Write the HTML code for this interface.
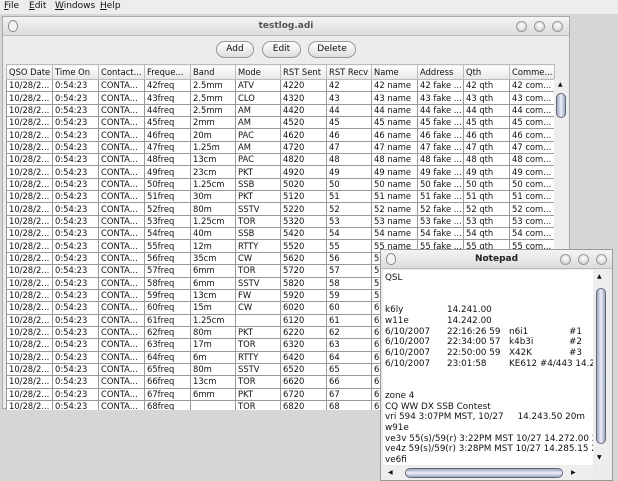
<!DOCTYPE html>
<html><head><meta charset="utf-8"><style>
*{margin:0;padding:0;box-sizing:border-box}
body{width:618px;height:480px;background:#d6d6d6;font-family:"DejaVu Sans","Liberation Sans",sans-serif;font-size:9px;color:#111;position:relative;overflow:hidden}
.menu{position:absolute;left:0;top:0;width:618px;height:14px;background:#ededed;font-size:9px}
.menu span{position:absolute;top:1px}
.menu u{text-decoration:underline}
.win{position:absolute;left:2px;top:16px;width:568px;height:393px;background:#ececec;border:1px solid #aaa}
.tb{position:absolute;left:0;top:0;width:100%;height:19px;background:linear-gradient(#f4f4f4,#dcdcdc);border-bottom:1px solid #bbb;text-align:center;font-weight:bold;line-height:19px;color:#555;font-size:9px}
.circ{position:absolute;top:4px;width:11px;height:11px;border-radius:50%;border:1px solid #999;background:radial-gradient(circle at 50% 35%,#fff,#c8c8c8)}
.apple{position:absolute;top:3px;width:10px;height:12px;border:1px solid #888;border-radius:50% 50% 45% 45%;background:#f4f4f4}
.btn{position:absolute;top:24px;height:17px;border:1px solid #999;border-radius:9px;background:linear-gradient(#fff,#ddd);text-align:center;line-height:15px;font-size:9px}
table{position:absolute;left:3px;top:47px;border-collapse:collapse;table-layout:fixed;background:#fff}
td,th{border:1px solid #999;height:12.35px;padding:0 0 0 2px;white-space:nowrap;overflow:hidden;font-weight:normal;text-align:left;font-size:8.4px;line-height:11px}
th{background:linear-gradient(#fff,#e6e6e6);height:15px;border-color:#bbb}
.clip{position:absolute;left:3px;top:47px;width:549px;height:346px;overflow:hidden}
.clip table{left:0;top:0}
.vs{position:absolute;left:551px;top:62px;width:14px;height:330px;background:#eee}
.thumb{position:absolute;left:2px;top:14px;width:10px;height:25px;border:1px solid #667;border-radius:5px;background:linear-gradient(90deg,#9ab,#eef,#9ab)}
.np{position:absolute;left:380px;top:249px;width:233px;height:232px;background:#ececec;border:1px solid #999}
.np .tb{color:#222}
.txt{position:absolute;left:2px;top:20px;width:210px;height:195px;background:#fff;overflow:hidden}
.ln{position:absolute;left:2px;height:11px;white-space:nowrap;font-size:8.8px}
.ln b{position:absolute;font-weight:normal}
.nvs{position:absolute;left:212px;top:20px;width:15px;height:195px;background:#eee}
.nth{position:absolute;left:3px;top:18px;width:10px;height:156px;border:1px solid #667;border-radius:5px;background:linear-gradient(90deg,#9ab,#eef,#9ab)}
.nhs{position:absolute;left:2px;top:216px;width:210px;height:14px;background:#eee}
.nhth{position:absolute;left:22px;top:2px;width:158px;height:10px;border:1px solid #667;border-radius:5px;background:linear-gradient(#9ab,#eef,#9ab)}
</style></head><body>
<div class="menu"><span style="left:4px"><u>F</u>ile</span><span style="left:29px"><u>E</u>dit</span><span style="left:55px"><u>W</u>indows</span><span style="left:100px"><u>H</u>elp</span></div>
<div class="win">
<div class="tb">testlog.adi<div class="apple" style="left:5px"></div><div class="circ" style="left:513px"></div><div class="circ" style="left:531px"></div><div class="circ" style="left:549px"></div></div>
<div class="btn" style="left:213px;width:38px">Add</div>
<div class="btn" style="left:259px;width:39px">Edit</div>
<div class="btn" style="left:305px;width:48px">Delete</div>
<div class="clip"><table>
<colgroup><col style="width:46px"><col style="width:46px"><col style="width:46px"><col style="width:46px"><col style="width:45px"><col style="width:45px"><col style="width:46px"><col style="width:45px"><col style="width:46px"><col style="width:46px"><col style="width:46px"><col style="width:45px"></colgroup>
<tr><th>QSO Date</th><th>Time On</th><th>Contact...</th><th>Freque...</th><th>Band</th><th>Mode</th><th>RST Sent</th><th>RST Recv</th><th>Name</th><th>Address</th><th>Qth</th><th>Comme...</th></tr>
<tr><td>10/28/2...</td><td>0:54:23</td><td>CONTA...</td><td>42freq</td><td>2.5mm</td><td>ATV</td><td>4220</td><td>42</td><td>42 name</td><td>42 fake ...</td><td>42 qth</td><td>42 com...</td></tr>
<tr><td>10/28/2...</td><td>0:54:23</td><td>CONTA...</td><td>43freq</td><td>2.5mm</td><td>CLO</td><td>4320</td><td>43</td><td>43 name</td><td>43 fake ...</td><td>43 qth</td><td>43 com...</td></tr>
<tr><td>10/28/2...</td><td>0:54:23</td><td>CONTA...</td><td>44freq</td><td>2.5mm</td><td>AM</td><td>4420</td><td>44</td><td>44 name</td><td>44 fake ...</td><td>44 qth</td><td>44 com...</td></tr>
<tr><td>10/28/2...</td><td>0:54:23</td><td>CONTA...</td><td>45freq</td><td>2mm</td><td>AM</td><td>4520</td><td>45</td><td>45 name</td><td>45 fake ...</td><td>45 qth</td><td>45 com...</td></tr>
<tr><td>10/28/2...</td><td>0:54:23</td><td>CONTA...</td><td>46freq</td><td>20m</td><td>PAC</td><td>4620</td><td>46</td><td>46 name</td><td>46 fake ...</td><td>46 qth</td><td>46 com...</td></tr>
<tr><td>10/28/2...</td><td>0:54:23</td><td>CONTA...</td><td>47freq</td><td>1.25m</td><td>AM</td><td>4720</td><td>47</td><td>47 name</td><td>47 fake ...</td><td>47 qth</td><td>47 com...</td></tr>
<tr><td>10/28/2...</td><td>0:54:23</td><td>CONTA...</td><td>48freq</td><td>13cm</td><td>PAC</td><td>4820</td><td>48</td><td>48 name</td><td>48 fake ...</td><td>48 qth</td><td>48 com...</td></tr>
<tr><td>10/28/2...</td><td>0:54:23</td><td>CONTA...</td><td>49freq</td><td>23cm</td><td>PKT</td><td>4920</td><td>49</td><td>49 name</td><td>49 fake ...</td><td>49 qth</td><td>49 com...</td></tr>
<tr><td>10/28/2...</td><td>0:54:23</td><td>CONTA...</td><td>50freq</td><td>1.25cm</td><td>SSB</td><td>5020</td><td>50</td><td>50 name</td><td>50 fake ...</td><td>50 qth</td><td>50 com...</td></tr>
<tr><td>10/28/2...</td><td>0:54:23</td><td>CONTA...</td><td>51freq</td><td>30m</td><td>PKT</td><td>5120</td><td>51</td><td>51 name</td><td>51 fake ...</td><td>51 qth</td><td>51 com...</td></tr>
<tr><td>10/28/2...</td><td>0:54:23</td><td>CONTA...</td><td>52freq</td><td>80m</td><td>SSTV</td><td>5220</td><td>52</td><td>52 name</td><td>52 fake ...</td><td>52 qth</td><td>52 com...</td></tr>
<tr><td>10/28/2...</td><td>0:54:23</td><td>CONTA...</td><td>53freq</td><td>1.25cm</td><td>TOR</td><td>5320</td><td>53</td><td>53 name</td><td>53 fake ...</td><td>53 qth</td><td>53 com...</td></tr>
<tr><td>10/28/2...</td><td>0:54:23</td><td>CONTA...</td><td>54freq</td><td>40m</td><td>SSB</td><td>5420</td><td>54</td><td>54 name</td><td>54 fake ...</td><td>54 qth</td><td>54 com...</td></tr>
<tr><td>10/28/2...</td><td>0:54:23</td><td>CONTA...</td><td>55freq</td><td>12m</td><td>RTTY</td><td>5520</td><td>55</td><td>55 name</td><td>55 fake ...</td><td>55 qth</td><td>55 com...</td></tr>
<tr><td>10/28/2...</td><td>0:54:23</td><td>CONTA...</td><td>56freq</td><td>35cm</td><td>CW</td><td>5620</td><td>56</td><td>56 name</td><td>56 fake ...</td><td>56 qth</td><td>56 com...</td></tr>
<tr><td>10/28/2...</td><td>0:54:23</td><td>CONTA...</td><td>57freq</td><td>6mm</td><td>TOR</td><td>5720</td><td>57</td><td>57 name</td><td>57 fake ...</td><td>57 qth</td><td>57 com...</td></tr>
<tr><td>10/28/2...</td><td>0:54:23</td><td>CONTA...</td><td>58freq</td><td>6mm</td><td>SSTV</td><td>5820</td><td>58</td><td>58 name</td><td>58 fake ...</td><td>58 qth</td><td>58 com...</td></tr>
<tr><td>10/28/2...</td><td>0:54:23</td><td>CONTA...</td><td>59freq</td><td>13cm</td><td>FW</td><td>5920</td><td>59</td><td>59 name</td><td>59 fake ...</td><td>59 qth</td><td>59 com...</td></tr>
<tr><td>10/28/2...</td><td>0:54:23</td><td>CONTA...</td><td>60freq</td><td>15m</td><td>CW</td><td>6020</td><td>60</td><td>60 name</td><td>60 fake ...</td><td>60 qth</td><td>60 com...</td></tr>
<tr><td>10/28/2...</td><td>0:54:23</td><td>CONTA...</td><td>61freq</td><td>1.25cm</td><td></td><td>6120</td><td>61</td><td>61 name</td><td>61 fake ...</td><td>61 qth</td><td>61 com...</td></tr>
<tr><td>10/28/2...</td><td>0:54:23</td><td>CONTA...</td><td>62freq</td><td>80m</td><td>PKT</td><td>6220</td><td>62</td><td>62 name</td><td>62 fake ...</td><td>62 qth</td><td>62 com...</td></tr>
<tr><td>10/28/2...</td><td>0:54:23</td><td>CONTA...</td><td>63freq</td><td>17m</td><td>TOR</td><td>6320</td><td>63</td><td>63 name</td><td>63 fake ...</td><td>63 qth</td><td>63 com...</td></tr>
<tr><td>10/28/2...</td><td>0:54:23</td><td>CONTA...</td><td>64freq</td><td>6m</td><td>RTTY</td><td>6420</td><td>64</td><td>64 name</td><td>64 fake ...</td><td>64 qth</td><td>64 com...</td></tr>
<tr><td>10/28/2...</td><td>0:54:23</td><td>CONTA...</td><td>65freq</td><td>80m</td><td>SSTV</td><td>6520</td><td>65</td><td>65 name</td><td>65 fake ...</td><td>65 qth</td><td>65 com...</td></tr>
<tr><td>10/28/2...</td><td>0:54:23</td><td>CONTA...</td><td>66freq</td><td>13cm</td><td>TOR</td><td>6620</td><td>66</td><td>66 name</td><td>66 fake ...</td><td>66 qth</td><td>66 com...</td></tr>
<tr><td>10/28/2...</td><td>0:54:23</td><td>CONTA...</td><td>67freq</td><td>6mm</td><td>PKT</td><td>6720</td><td>67</td><td>67 name</td><td>67 fake ...</td><td>67 qth</td><td>67 com...</td></tr>
<tr><td>10/28/2...</td><td>0:54:23</td><td>CONTA...</td><td>68freq</td><td></td><td>TOR</td><td>6820</td><td>68</td><td>68 name</td><td>68 fake ...</td><td>68 qth</td><td>68 com...</td></tr>
</table></div>
<div class="vs"><div style="position:absolute;left:4px;top:2px;font-size:6px">▲</div><div class="thumb"></div></div>
</div>
<div class="np">
<div class="tb">Notepad<div class="apple" style="left:5px"></div><div class="circ" style="left:179px"></div><div class="circ" style="left:197px"></div><div class="circ" style="left:215px"></div></div>
<div class="txt">
<div class="ln" style="top:3px">QSL</div>
<div class="ln" style="top:35px">k6ly<b style="left:62px">14.241.00</b></div>
<div class="ln" style="top:46px">w11e<b style="left:62px">14.242.00</b></div>
<div class="ln" style="top:57px">6/10/2007<b style="left:62px">22:16:26 59</b><b style="left:124px">n6i1</b><b style="left:184px">#1</b></div>
<div class="ln" style="top:67px">6/10/2007<b style="left:62px">22:34:00 57</b><b style="left:124px">k4b3i</b><b style="left:184px">#2</b></div>
<div class="ln" style="top:78px">6/10/2007<b style="left:62px">22:50:00 59</b><b style="left:124px">X42K</b><b style="left:184px">#3</b></div>
<div class="ln" style="top:89px">6/10/2007<b style="left:62px">23:01:58</b><b style="left:124px">KE612 #4/443 14.28</b></div>
<div class="ln" style="top:121px">zone 4</div>
<div class="ln" style="top:132px">CQ WW DX SSB Contest</div>
<div class="ln" style="top:142px">vri 594 3:07PM MST, 10/27&nbsp;&nbsp;&nbsp;&nbsp; 14.243.50 20m</div>
<div class="ln" style="top:153px">w91e</div>
<div class="ln" style="top:164px">ve3v 55(s)/59(r) 3:22PM MST 10/27 14.272.00 20m</div>
<div class="ln" style="top:174px">ve4z 59(s)/59(r) 3:28PM MST 10/27 14.285.15 20m</div>
<div class="ln" style="top:185px">ve6fi</div>
</div>
<div class="nvs"><div style="position:absolute;left:4px;top:3px;font-size:6px">▲</div><div class="nth"></div><div style="position:absolute;left:4px;top:184px;font-size:6px">▼</div></div>
<div class="nhs"><div style="position:absolute;left:5px;top:3px;font-size:6px">◀</div><div class="nhth"></div><div style="position:absolute;left:188px;top:3px;font-size:6px">▶</div></div>
</div>
</body></html>
